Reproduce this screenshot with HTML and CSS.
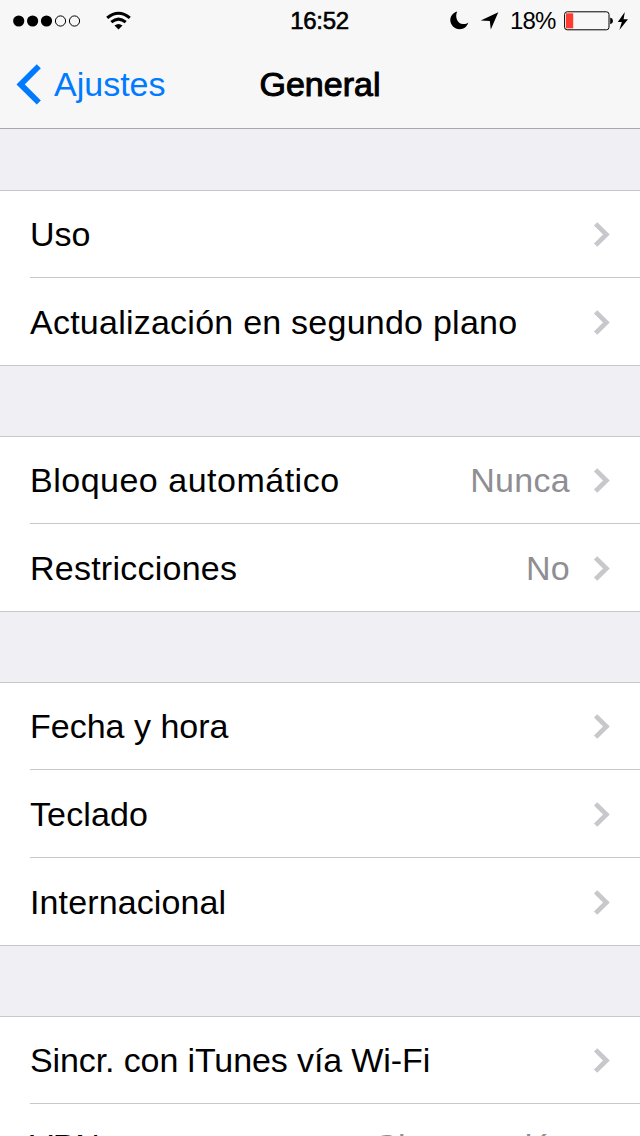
FILE: index.html
```html
<!DOCTYPE html>
<html lang="es">
<head>
<meta charset="utf-8">
<title>General</title>
<link rel="stylesheet" href="styles.css">
</head>
<body>
<svg class="defs" width="0" height="0">
  <symbol id="chevron" viewBox="0 0 18 26"><path d="M2.6 2.9 13.4 13.5 2.6 24.1" fill="none" stroke="#c7c7cc" stroke-width="4.7"/></symbol>
</svg>
<div class="screen">
  <header class="header">
    <div class="status">
      <div class="status-left">
        <svg class="signal" viewBox="0 0 68 12">
          <circle cx="5.7" cy="6" r="5.6"/><circle cx="19.6" cy="6" r="5.6"/><circle cx="33.5" cy="6" r="5.6"/>
          <g fill="none" stroke="#000" stroke-width="1"><circle cx="47.5" cy="6" r="5.1"/><circle cx="61.5" cy="6" r="5.1"/></g>
        </svg>
        <svg class="wifi" viewBox="0 0 26 20">
          <g fill="none" stroke="#000" stroke-width="3"><path d="M1.2 6.9Q12.5 -2.5 23.8 6.9"/><path d="M5.3 11.2Q12.5 5 19.7 11.2"/></g>
          <path d="M8.5 14.6Q12.5 11.4 16.5 14.6L12.5 18.6z"/>
        </svg>
      </div>
      <div class="time">16:52</div>
      <div class="status-right">
        <svg class="moon" viewBox="0 0 19 19"><path d="M7.2.4C4.7 5.2 7 12.9 13.1 13.1 15.3 13.2 17 12.6 18.4 11.5 17 15.8 13.8 18.2 9.6 18.2 4.5 18.2.3 14.2.3 9.1.3 5 3 1.6 7.2.4z"/></svg>
        <svg class="location" viewBox="0 0 18 18"><path d="M17.3.2-.3 8.4 8.8 9.1 9.8 17.4z"/></svg>
        <span class="percent">18%</span>
        <svg class="battery" viewBox="0 0 50 20">
          <rect x=".6" y=".8" width="44.4" height="18" rx="2.6" fill="none" stroke="#000" stroke-width="1"/>
          <rect x="2" y="2.3" width="7.2" height="15" fill="#ff3b30"/>
          <path d="M46.2 6.5Q49 7.5 49 9.9T46.2 13.3z"/>
        </svg>
        <svg class="bolt" viewBox="0 0 12 18"><path d="M7.8 0 .8 10H4.8L2.4 18 11 7.2H6.6z"/></svg>
      </div>
    </div>
    <nav class="nav">
      <a class="back">
        <svg class="back-icon" viewBox="0 0 26 42"><path d="M22.8 3.3 4.6 21.4 22.8 39.5" fill="none" stroke="#007aff" stroke-width="5.8"/></svg>
        <span class="back-label">Ajustes</span>
      </a>
      <h1 class="title">General</h1>
    </nav>
  </header>
  <main class="content">
    <ul class="group">
      <li class="row"><div class="cell"><span class="label">Uso</span><svg class="chevron"><use href="#chevron"/></svg></div></li>
      <li class="row"><div class="cell"><span class="label spaced">Actualización en segundo plano</span><svg class="chevron"><use href="#chevron"/></svg></div></li>
    </ul>
    <ul class="group">
      <li class="row"><div class="cell"><span class="label wide">Bloqueo automático</span><span class="value">Nunca</span><svg class="chevron"><use href="#chevron"/></svg></div></li>
      <li class="row"><div class="cell"><span class="label spaced">Restricciones</span><span class="value">No</span><svg class="chevron"><use href="#chevron"/></svg></div></li>
    </ul>
    <ul class="group">
      <li class="row"><div class="cell"><span class="label">Fecha y hora</span><svg class="chevron"><use href="#chevron"/></svg></div></li>
      <li class="row"><div class="cell"><span class="label slight">Teclado</span><svg class="chevron"><use href="#chevron"/></svg></div></li>
      <li class="row"><div class="cell"><span class="label slight">Internacional</span><svg class="chevron"><use href="#chevron"/></svg></div></li>
    </ul>
    <ul class="group">
      <li class="row"><div class="cell"><span class="label tight">Sincr. con iTunes vía Wi-Fi</span><svg class="chevron"><use href="#chevron"/></svg></div></li>
      <li class="row"><div class="cell raised"><span class="label">VPN</span><span class="value">Sin conexión</span><svg class="chevron"><use href="#chevron"/></svg></div></li>
    </ul>
  </main>
</div>
</body>
</html>
```
FILE: styles.css
```css
* { box-sizing: border-box; }
body {
  margin: 0;
  background: #efeff4;
  color: #000;
  font-family: "Liberation Sans", Arial, sans-serif;
}
svg { display: block; flex: none; }
.defs { position: absolute; }
.screen {
  display: flex;
  flex-direction: column;
  width: 640px;
  height: 1136px;
  overflow: hidden;
}
.header {
  flex: none;
  height: 129px;
  background: #f7f7f7;
  border-bottom: 1px solid #a7a7ac;
}
.status {
  display: grid;
  grid-template-columns: 1fr auto 1fr;
  align-items: center;
  height: 40px;
  padding: 1px 11px 0 10px;
}
.status-left, .status-right { display: flex; align-items: center; }
.status-left { padding-left: 3px; }
.status-right { justify-content: flex-end; }
.signal { width: 68px; height: 12px; }
.wifi { width: 26px; height: 20px; margin-left: 25px; }
.time {
  font-size: 24px;
  line-height: 38px;
  letter-spacing: -0.3px;
  -webkit-text-stroke: 0.6px #000;
}
.moon { width: 19px; height: 19px; }
.location { width: 18px; height: 18px; margin-left: 12px; overflow: visible; }
.percent { width: 65px; padding-left: 11px; font-size: 24px; line-height: 38px; letter-spacing: -0.9px; }
.battery { width: 50px; height: 20px; }
.bolt { width: 12px; height: 18px; margin-left: 3px; }
.nav {
  display: grid;
  grid-template-columns: 1fr auto 1fr;
  align-items: center;
  height: 88px;
  padding: 0 16px;
}
.back { display: flex; align-items: center; color: #007aff; }
.back-icon { width: 26px; height: 42px; }
.back-label { margin-left: 12px; font-size: 34px; line-height: 40px; }
.title {
  margin: 0;
  font-size: 34px;
  font-weight: 400;
  line-height: 40px;
  -webkit-text-stroke: 1px #000;
}
.content {
  display: flex;
  flex-direction: column;
  gap: 70px;
  padding-top: 61px;
}
.group {
  flex: none;
  margin: 0;
  padding: 0;
  list-style: none;
  background: #fff;
  border-bottom: 1px solid #c8c7cc;
}
.row { padding-left: 30px; }
.row:first-child { border-top: 1px solid #c8c7cc; }
.cell {
  display: flex;
  align-items: center;
  height: 88px;
  padding: 1px 29px 0 0;
  border-bottom: 1px solid #c8c7cc;
}
.row:first-child .cell { height: 87px; padding-top: 0; }
.row:last-child .cell { height: 87px; border-bottom: 0; }
.label { flex: 1; font-size: 34px; line-height: 40px; white-space: nowrap; }
.wide { letter-spacing: 0.5px; }
.spaced { letter-spacing: 0.24px; }
.slight { letter-spacing: 0.12px; }
.tight { letter-spacing: -0.11px; }
.value { margin-right: 23px; color: #8e8e93; font-size: 34px; line-height: 40px; letter-spacing: 0.3px; }
.raised .label, .raised .value { padding-bottom: 4px; letter-spacing: 0; }
.chevron { width: 18px; height: 26px; }
```
